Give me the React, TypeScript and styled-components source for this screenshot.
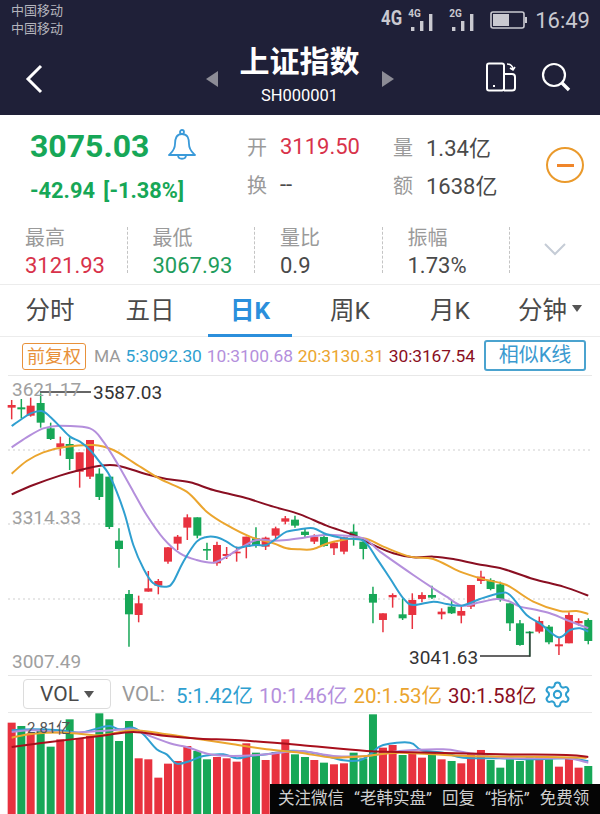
import React from 'react';
import styled, { createGlobalStyle } from 'styled-components';
import { Settings } from 'lucide-react';

const RED = '#e8323f';
const GREEN = '#17a757';
const BLUE = '#2f9fd0';
const PURPLE = '#b48fdc';
const ORANGE = '#eba52e';
const MAROON = '#8a0f22';

const GlobalStyle = createGlobalStyle`
  html, body {
    margin: 0;
    padding: 0;
    background: #fff;
    font-family: Roboto, "Noto Sans CJK SC", sans-serif;
  }
`;

const Page = styled.div`
  width: 600px;
  height: 814px;
  overflow: hidden;
  position: relative;
  background: #fff;
`;

/* ---------- header ---------- */
const Header = styled.header`
  height: 115px;
  background: #1f2038;
  color: #fff;
`;

const StatusBar = styled.div`
  height: 38px;
  display: flex;
  justify-content: space-between;
  padding: 2px 0 0 11px;
`;

const Carriers = styled.div`
  font-size: 13px;
  line-height: 18px;
  color: #b4b4bc;
`;

const StatusRight = styled.div`
  display: flex;
  align-items: center;
  height: 36px;
  color: #c9c9d0;
`;

const Clock = styled.span`
  font-size: 22px;
  margin-left: 8px;
  margin-right: 10px;
`;

const SignalWrap = styled.div`
  position: relative;
  width: 29px;
  height: 26px;
  margin-right: 12px;
`;

const SignalLabel = styled.span`
  position: absolute;
  left: 0;
  top: 1px;
  font-size: 10px;
  font-weight: 700;
`;

const Net = styled.span`
  font-size: 21px;
  font-weight: 700;
  margin-right: 5px;
  transform: scaleX(0.8) translateY(-2px);
  transform-origin: left center;
  width: 22px;
`;

const Nav = styled.div`
  height: 77px;
  display: flex;
  align-items: flex-start;
  position: relative;
`;

const BackBtn = styled.div`
  width: 68px;
  padding: 24px 0 0 25px;
  box-sizing: border-box;
`;

const TitleArea = styled.div`
  flex: 1;
  display: flex;
  justify-content: center;
  align-items: flex-start;
  gap: 22px;
  padding-left: 46px;
`;

const Arrow = styled.span<{ $dir: 'left' | 'right' }>`
  width: 0;
  height: 0;
  margin-top: 31px;
  border-top: 8px solid transparent;
  border-bottom: 8px solid transparent;
  ${(p) => (p.$dir === 'left' ? 'border-right: 12px solid #8c8c96;' : 'border-left: 12px solid #8c8c96;')}
`;

const TitleBlock = styled.div`
  width: 120px;
  text-align: center;
`;

const Title = styled.div`
  font-size: 30px;
  font-weight: 700;
  line-height: 44px;
  white-space: nowrap;
`;

const Code = styled.div`
  font-size: 16.5px;
  line-height: 18px;
  margin-top: 3px;
`;

const NavIcons = styled.div`
  width: 115px;
  display: flex;
  gap: 24px;
  padding-top: 22px;
`;

/* ---------- quote ---------- */
const Quote = styled.section`
  height: 103px;
  display: flex;
  padding-top: 10px;
  box-sizing: border-box;
  position: relative;
`;

const PriceCol = styled.div`
  width: 247px;
  padding-left: 30px;
  box-sizing: border-box;
`;

const PriceRow = styled.div`
  display: flex;
  align-items: center;
  gap: 18px;
  height: 42px;
`;

const Price = styled.span`
  font-size: 32px;
  font-weight: 700;
  color: ${GREEN};
`;

const Change = styled.div`
  font-size: 21.8px;
  font-weight: 700;
  line-height: 26px;
  margin-top: 11px;
  color: ${GREEN};
  word-spacing: 3px;
  white-space: nowrap;
`;

const InfoCol = styled.div<{ $w: number }>`
  width: ${(p) => p.$w}px;
  margin-top: 2px;
`;

const InfoRow = styled.div`
  display: flex;
  align-items: center;
  height: 38px;
`;

const InfoKey = styled.span`
  width: 33px;
  font-size: 20px;
  color: #9a9a9a;
`;

const InfoVal = styled.span<{ $color?: string }>`
  font-size: 22px;
  color: ${(p) => p.$color || '#4a4a4a'};
`;

const MinusBtn = styled.div`
  position: absolute;
  left: 546px;
  top: 32px;
  width: 34px;
  height: 32px;
  border: 2px solid #ea9a2c;
  border-radius: 50%;
  display: flex;
  align-items: center;
  justify-content: center;
  &::after {
    content: '';
    width: 17px;
    height: 3px;
    background: #f0862a;
  }
`;

/* ---------- stats ---------- */
const Stats = styled.section`
  height: 67px;
  display: flex;
  padding-top: 9px;
  box-sizing: border-box;
  border-bottom: 1px solid #ececec;
`;

const Stat = styled.div`
  width: 127.5px;
  height: 46px;
  box-sizing: border-box;
  padding-left: 25px;
  border-right: 1px dashed #c4c4c4;
`;

const StatKey = styled.div`
  font-size: 20px;
  line-height: 24px;
  margin-top: -1px;
  color: #9a9a9a;
`;

const StatVal = styled.div<{ $color?: string }>`
  font-size: 22px;
  line-height: 26px;
  margin-top: 3px;
  white-space: nowrap;
  color: ${(p) => p.$color || '#4a4a4a'};
`;

const Expand = styled.div`
  flex: 1;
  padding: 14px 0 0 33px;
`;

/* ---------- tabs ---------- */
const Tabs = styled.nav`
  height: 52px;
  display: grid;
  grid-template-columns: repeat(6, 100px);
  border-bottom: 1px solid #ececec;
  box-sizing: border-box;
`;

const Tab = styled.div<{ $active?: boolean }>`
  position: relative;
  display: flex;
  align-items: center;
  justify-content: center;
  padding-bottom: 4px;
  font-size: 24.5px;
  font-weight: ${(p) => (p.$active ? 700 : 400)};
  color: ${(p) => (p.$active ? '#2b8fdc' : '#4a4a4a')};
  ${(p) =>
    p.$active &&
    `&::after {
      content: '';
      position: absolute;
      left: 8px;
      right: 8px;
      bottom: -1px;
      height: 3px;
      background: #2b8fdc;
    }`}
`;

const Caret = styled.span`
  margin-left: 5px;
  width: 0;
  height: 0;
  border-left: 5px solid transparent;
  border-right: 5px solid transparent;
  border-top: 7px solid #555;
`;

/* ---------- indicator toolbars ---------- */
const MaBar = styled.div`
  height: 39px;
  margin: 0 8px;
  padding-left: 14px;
  display: flex;
  align-items: center;
  border-bottom: 1px solid #e8e8e8;
  box-sizing: border-box;
  position: relative;
`;

const AdjustBtn = styled.span`
  width: 64px;
  height: 27px;
  box-sizing: border-box;
  border: 1px solid #e8913a;
  border-radius: 3px;
  color: #e8913a;
  font-size: 18px;
  line-height: 25px;
  text-align: center;
  white-space: nowrap;
  margin-right: 8px;
`;

const MaText = styled.span<{ $color: string }>`
  font-size: 17.4px;
  letter-spacing: -0.1px;
  color: ${(p) => p.$color};
  margin-right: 5px;
  white-space: nowrap;
`;

const SimilarBtn = styled.span`
  position: absolute;
  left: 476px;
  top: 3px;
  width: 102px;
  height: 31px;
  box-sizing: border-box;
  background: #fff;
  border: 2px solid #4ba3cf;
  border-radius: 3px;
  color: #3a9ad0;
  font-size: 20px;
  line-height: 26px;
  text-align: center;
  white-space: nowrap;
`;

const ChartArea = styled.div`
  position: relative;
  height: 299px;
`;

const ChartSvg = styled.svg`
  display: block;
  width: 600px;
`;

const AxisLabel = styled.span<{ $top: number }>`
  position: absolute;
  left: 12px;
  top: ${(p) => p.$top}px;
  font-size: 19px;
  line-height: 20px;
  color: #a0a0a0;
`;

const ExtremeLabel = styled.span<{ $left: number; $top: number }>`
  position: absolute;
  left: ${(p) => p.$left}px;
  top: ${(p) => p.$top}px;
  font-size: 19px;
  line-height: 20px;
  color: #333;
`;

const VolBar = styled.div`
  height: 38px;
  margin: 0 8px;
  padding-left: 15px;
  display: flex;
  align-items: center;
  border-top: 1px solid #e4e4e4;
  border-bottom: 1px solid #e8e8e8;
  box-sizing: border-box;
`;

const VolSelect = styled.span`
  width: 88px;
  height: 30px;
  box-sizing: border-box;
  border: 1px solid #dcdcdc;
  border-radius: 4px;
  display: flex;
  align-items: center;
  justify-content: center;
  font-size: 21px;
  color: #4a4a4a;
  margin-right: 11px;
`;

const VolText = styled.span<{ $color: string }>`
  font-size: 20.5px;
  color: ${(p) => p.$color};
  margin-right: 6px;
  white-space: nowrap;
`;

const VolCaption = styled(VolText)`
  margin-right: 11px;
`;

const GearWrap = styled.span`
  display: flex;
  color: ${BLUE};
  margin-left: 1px;
`;

const VolArea = styled.div`
  position: relative;
  height: 102px;
`;

const VolMax = styled.span`
  position: absolute;
  left: 27px;
  top: 3px;
  font-size: 15px;
  color: #555;
`;

const Watermark = styled.div`
  position: absolute;
  left: 270px;
  bottom: 0;
  width: 330px;
  height: 30px;
  background: #050505;
  color: #cfcfcf;
  font-size: 16.5px;
  line-height: 30px;
  white-space: nowrap;
  padding-left: 8px;
  box-sizing: border-box;
  word-spacing: 6px;
`;

/* ---------- data, zoom-crop units (3 = 1px) ---------- */
type Candle = [number, number, number, number, number, 'R' | 'G'];

const left: Candle[] = [
  [35, 75, 133, 90, 98, 'R'], [64, 72, 130, 97, 103, 'G'], [92, 68, 125, 92, 122, 'R'],
  [122, 55, 158, 84, 143, 'G'], [152, 143, 195, 160, 192, 'G'], [181, 185, 242, 205, 217, 'R'],
  [209, 187, 285, 207, 252, 'G'], [239, 232, 338, 232, 290, 'R'], [270, 195, 312, 195, 305, 'R'],
  [298, 280, 375, 296, 366, 'G'], [328, 305, 462, 305, 456, 'G'], [357, 460, 578, 497, 522, 'G'],
  [387, 645, 815, 657, 718, 'G'], [416, 662, 742, 685, 720, 'R'], [445, 588, 650, 640, 650, 'R'],
  [475, 612, 658, 618, 632, 'R'], [504, 516, 566, 517, 560, 'R'], [533, 480, 525, 485, 506, 'R'],
  [562, 418, 495, 427, 458, 'R'], [592, 427, 490, 427, 482, 'G'], [621, 503, 555, 522, 527, 'G'],
  [651, 500, 572, 510, 565, 'R'], [680, 516, 552, 537, 543, 'R'], [710, 515, 560, 530, 535, 'R'],
  [739, 485, 550, 485, 516, 'R'], [768, 457, 518, 490, 512, 'G'], [797, 485, 525, 488, 515, 'R'],
  [827, 455, 492, 460, 482, 'R'], [856, 423, 448, 430, 440, 'R'], [885, 422, 458, 434, 452, 'G'],
];

const right: Candle[] = [
  [15, 462, 487, 470, 480, 'G'], [43, 478, 507, 485, 500, 'R'], [72, 480, 515, 486, 513, 'G'],
  [102, 500, 540, 503, 520, 'R'], [132, 485, 538, 487, 530, 'R'], [161, 448, 512, 470, 485, 'G'],
  [190, 492, 553, 500, 522, 'G'], [219, 635, 745, 657, 683, 'G'], [249, 715, 772, 715, 735, 'R'],
  [278, 655, 698, 660, 667, 'R'], [308, 670, 735, 718, 730, 'G'], [337, 655, 762, 675, 720, 'R'],
  [366, 652, 682, 660, 672, 'R'], [396, 632, 672, 660, 668, 'G'], [425, 700, 733, 710, 718, 'R'],
  [455, 678, 717, 695, 715, 'G'], [484, 695, 745, 708, 722, 'R'], [513, 630, 702, 630, 695, 'R'],
  [543, 587, 627, 605, 618, 'R'], [572, 610, 646, 615, 642, 'G'], [601, 620, 680, 628, 675, 'G'],
  [630, 685, 768, 685, 745, 'G'], [660, 735, 812, 745, 810, 'G'], [689, 768, 845, 770, 775, 'G'],
  [718, 725, 775, 738, 770, 'R'], [747, 750, 808, 755, 802, 'G'], [777, 785, 840, 808, 814, 'R'],
  [807, 712, 805, 720, 805, 'R'], [836, 730, 752, 738, 745, 'R'], [865, 730, 808, 735, 798, 'G'],
];

const candles: Candle[] = [...left, ...right.map((c) => [c[0] + 900, c[1], c[2], c[3], c[4], c[5]] as Candle)];

const joinLine = (a: number[][], b: number[][]) => [...a, ...b.map(([x, y]) => [x + 900, y])];

const maLines: [string, number[][]][] = [
  [MAROON, joinLine(
    [[35,358],[100,330],[180,302],[240,285],[300,272],[355,272],[440,298],[500,312],[570,322],[640,345],[730,367],[820,395]],
    [[0,418],[80,452],[160,480],[220,510],[280,535],[340,547],[400,545],[460,552],[530,567],[610,582],[700,612],[790,635],[865,662]],
  )],
  [ORANGE, joinLine(
    [[35,296],[80,258],[130,232],[190,217],[280,210],[340,225],[400,262],[480,312],[560,350],[620,410],[680,450],[750,485],[820,505],[860,520]],
    [[0,523],[40,522],[100,500],[190,490],[250,515],[330,545],[400,552],[480,590],[560,615],[620,630],[700,680],[780,708],[830,708],[865,717]],
  )],
  [PURPLE, joinLine(
    [[35,217],[80,187],[130,160],[180,152],[270,160],[310,200],[350,262],[400,350],[440,420],[490,490],[540,535],[590,555],[640,563],[680,545],[720,520],[770,495],[820,497],[860,495]],
    [[0,490],[50,482],[100,480],[190,490],[240,530],[340,600],[400,640],[440,665],[485,692],[540,682],[590,672],[625,678],[660,695],[700,703],[750,715],[800,735],[865,760]],
  )],
  [BLUE, joinLine(
    [[35,153],[65,132],[92,115],[125,108],[150,125],[180,155],[210,185],[240,200],[270,225],[300,262],[325,295],[350,350],[375,420],[400,510],[430,580],[460,625],[500,635],[520,620],[550,560],[590,500],[620,486],[650,487],[680,500],[710,518],[740,514],[770,510],[800,510],[830,490],[860,470]],
    [[0,463],[40,460],[80,478],[130,490],[190,497],[230,550],[270,610],[310,670],[340,690],[400,680],[440,687],[485,692],[540,672],[600,655],[630,660],[680,720],[720,745],[775,787],[810,765],[840,760],[865,770]],
  )],
];

const volTops = [
  155,165,187,178,227,205,145,203,195,127,145,210,150,262,265,320,278,270,225,240,265,258,262,272,217,245,267,243,205,250,
  258,267,275,280,277,245,262,130,230,222,252,245,260,245,265,270,277,250,237,267,290,265,270,255,255,265,287,260,290,285,
];

const volLines: [string, number[][]][] = [
  [BLUE, joinLine(
    [[35,178],[100,175],[180,178],[240,185],[300,170],[330,165],[360,175],[400,170],[430,190],[470,235],[500,250],[530,278],[570,270],[610,255],[670,250],[710,262],[750,255],[800,250],[860,240]],
    [[0,240],[60,250],[130,268],[180,268],[210,250],[250,222],[330,215],[365,238],[430,245],[490,260],[600,262],[700,265],[800,262],[865,270]],
  )],
  [PURPLE, joinLine(
    [[35,183],[100,178],[200,185],[300,180],[400,175],[450,195],[520,220],[560,228],[630,250],[700,255],[800,250]],
    [[0,240],[100,255],[200,255],[300,240],[430,235],[500,245],[600,260],[700,262],[800,262],[865,275]],
  )],
  [ORANGE, joinLine(
    [[35,200],[100,188],[200,185],[300,193],[400,178],[500,190],[600,205],[700,220],[800,235]],
    [[0,245],[100,260],[200,255],[300,245],[500,255],[700,257],[860,260]],
  )],
  ['#a80f1c', joinLine(
    [[35,228],[150,213],[300,195],[400,183],[500,195],[600,203],[720,208]],
    [[0,222],[200,240],[400,245],[600,250],[800,252],[865,258]],
  )],
];

// smooth path through the sampled points
const toPath = (pts: number[][]) => {
  let d = `M${pts[0][0]} ${pts[0][1]}`;
  for (let i = 0; i < pts.length - 1; i++) {
    const p0 = pts[i - 1] || pts[i];
    const p1 = pts[i];
    const p2 = pts[i + 1];
    const p3 = pts[i + 2] || p2;
    const c1x = p1[0] + (p2[0] - p0[0]) / 6;
    const c1y = p1[1] + (p2[1] - p0[1]) / 6;
    const c2x = p2[0] - (p3[0] - p1[0]) / 6;
    const c2y = p2[1] - (p3[1] - p1[1]) / 6;
    d += `C${c1x} ${c1y} ${c2x} ${c2y} ${p2[0]} ${p2[1]}`;
  }
  return d;
};

const colorOf = (c: 'R' | 'G') => (c === 'R' ? RED : GREEN);

/* chart svg starts at page y=376; crop y=0 is page y=375 */
const KChart = () => (
  <ChartSvg height="299" viewBox="0 1 600 299">
    {[75, 149, 224].map((y) => (
      <line key={y} x1="8" x2="592" y1={y} y2={y} stroke="#cfcfcf" strokeDasharray="2 3" />
    ))}
    <g transform="scale(0.3333)" fill="none">
      {candles.map((c) => (
        <g key={c[0]}>
          <line x1={c[0]} x2={c[0]} y1={c[1]} y2={c[2]} stroke={colorOf(c[5])} strokeWidth="4.5" />
          <rect x={c[0] - 12} y={c[3]} width="24" height={Math.max(c[4] - c[3], 5)} fill={colorOf(c[5])} />
        </g>
      ))}
      {maLines.map(([color, pts]) => (
        <path key={color} d={toPath(pts)} stroke={color} strokeWidth="6" strokeLinejoin="round" />
      ))}
    </g>
    <path d="M40 17H91" stroke="#333" strokeWidth="1.3" fill="none" />
    <path d="M480 281H530V257" stroke="#333" strokeWidth="1.3" fill="none" />
  </ChartSvg>
);

/* volume svg starts at page y=712; crop y=0 is page y=670 */
const VolChart = () => (
  <ChartSvg height="102" viewBox="0 42 600 102">
    <g transform="scale(0.3333)" fill="none">
      {candles.map((c, i) => (
        <rect key={c[0]} x={c[0] - 12} y={volTops[i]} width="24" height={440 - volTops[i]} fill={colorOf(c[5])} />
      ))}
      {volLines.map(([color, pts]) => (
        <path key={color} d={toPath(pts)} stroke={color} strokeWidth="6" strokeLinejoin="round" />
      ))}
    </g>
  </ChartSvg>
);

const SignalBars = ({ label }: { label: string }) => (
  <SignalWrap>
    <SignalLabel>{label}</SignalLabel>
    <svg width="29" height="26" viewBox="0 0 29 26" fill="#c9c9d0">
      <rect x="3" y="20" width="3.4" height="4" />
      <rect x="12" y="14" width="3.4" height="10" />
      <rect x="21" y="7" width="3.4" height="17" />
    </svg>
  </SignalWrap>
);

export default function App() {
  return (
    <Page>
      <GlobalStyle />
      <Header>
        <StatusBar>
          <Carriers>
            中国移动
            <br />
            中国移动
          </Carriers>
          <StatusRight>
            <Net>4G</Net>
            <SignalBars label="4G" />
            <SignalBars label="2G" />
            <svg width="37" height="20" viewBox="0 0 37 20" fill="none">
              <rect x="1" y="2" width="33" height="16" rx="2" stroke="#c9c9d0" strokeWidth="1.6" />
              <rect x="3" y="4" width="16" height="12" fill="#c9c9d0" />
              <rect x="35" y="7" width="2" height="6" fill="#c9c9d0" />
            </svg>
            <Clock>16:49</Clock>
          </StatusRight>
        </StatusBar>
        <Nav>
          <BackBtn>
            <svg width="20" height="30" viewBox="0 0 20 30" fill="none">
              <path d="M16 2L3 15L16 28" stroke="#fff" strokeWidth="3" />
            </svg>
          </BackBtn>
          <TitleArea>
            <Arrow $dir="left" />
            <TitleBlock>
              <Title>上证指数</Title>
              <Code>SH000001</Code>
            </TitleBlock>
            <Arrow $dir="right" />
          </TitleArea>
          <NavIcons>
            <svg width="32" height="30" viewBox="0 0 32 30" fill="none" stroke="#fff" strokeWidth="2">
              <rect x="2" y="1.5" width="17" height="27" rx="2" />
              <path d="M19 12H27Q30 12 30 15V26Q30 28.5 27 28.5H19" />
              <path d="M22 2Q27 2 28 7M25 6L28 8L30 5" strokeWidth="1.6" />
              <path d="M8 24H10" />
            </svg>
            <svg width="30" height="30" viewBox="0 0 30 30" fill="none" stroke="#fff">
              <circle cx="13" cy="13" r="11" strokeWidth="2.2" />
              <path d="M21 21L28 28" strokeWidth="3.4" />
            </svg>
          </NavIcons>
        </Nav>
      </Header>

      <Quote>
        <PriceCol>
          <PriceRow>
            <Price>3075.03</Price>
            <svg width="30" height="34" viewBox="0 0 30 34" fill="none" stroke="#3a9ad9" strokeWidth="1.8">
              <path d="M15 5C9 5 8 10 8 15C8 21 5 23 2 26H28C25 23 22 21 22 15C22 10 21 5 15 5Z" strokeLinejoin="round" />
              <circle cx="15" cy="3" r="2" />
              <path d="M11 26C11 31 19 31 19 26" />
            </svg>
          </PriceRow>
          <Change>-42.94 [-1.38%]</Change>
        </PriceCol>
        <InfoCol $w={146}>
          <InfoRow>
            <InfoKey>开</InfoKey>
            <InfoVal $color="#d8324a">3119.50</InfoVal>
          </InfoRow>
          <InfoRow>
            <InfoKey>换</InfoKey>
            <InfoVal>--</InfoVal>
          </InfoRow>
        </InfoCol>
        <InfoCol $w={150}>
          <InfoRow>
            <InfoKey>量</InfoKey>
            <InfoVal>1.34亿</InfoVal>
          </InfoRow>
          <InfoRow>
            <InfoKey>额</InfoKey>
            <InfoVal>1638亿</InfoVal>
          </InfoRow>
        </InfoCol>
        <MinusBtn />
      </Quote>

      <Stats>
        <Stat>
          <StatKey>最高</StatKey>
          <StatVal $color="#d8324a">3121.93</StatVal>
        </Stat>
        <Stat>
          <StatKey>最低</StatKey>
          <StatVal $color="#1f9d5c">3067.93</StatVal>
        </Stat>
        <Stat>
          <StatKey>量比</StatKey>
          <StatVal>0.9</StatVal>
        </Stat>
        <Stat>
          <StatKey>振幅</StatKey>
          <StatVal>1.73%</StatVal>
        </Stat>
        <Expand>
          <svg width="24" height="14" viewBox="0 0 24 14" fill="none">
            <path d="M2 2L12 12L22 2" stroke="#c5ccd6" strokeWidth="2" />
          </svg>
        </Expand>
      </Stats>

      <Tabs>
        <Tab>分时</Tab>
        <Tab>五日</Tab>
        <Tab $active>日K</Tab>
        <Tab>周K</Tab>
        <Tab>月K</Tab>
        <Tab>
          分钟
          <Caret />
        </Tab>
      </Tabs>

      <MaBar>
        <AdjustBtn>前复权</AdjustBtn>
        <MaText $color="#9a9a9a">MA</MaText>
        <MaText $color={BLUE}>5:3092.30</MaText>
        <MaText $color={PURPLE}>10:3100.68</MaText>
        <MaText $color={ORANGE}>20:3130.31</MaText>
        <MaText $color={MAROON}>30:3167.54</MaText>
        <SimilarBtn>相似K线</SimilarBtn>
      </MaBar>

      <ChartArea>
        <KChart />
        <AxisLabel $top={4}>3621.17</AxisLabel>
        <AxisLabel $top={132}>3314.33</AxisLabel>
        <AxisLabel $top={276}>3007.49</AxisLabel>
        <ExtremeLabel $left={93} $top={7}>3587.03</ExtremeLabel>
        <ExtremeLabel $left={409} $top={272}>3041.63</ExtremeLabel>
      </ChartArea>

      <VolBar>
        <VolSelect>
          VOL
          <Caret />
        </VolSelect>
        <VolCaption $color="#9a9a9a">VOL:</VolCaption>
        <VolText $color={BLUE}>5:1.42亿</VolText>
        <VolText $color={PURPLE}>10:1.46亿</VolText>
        <VolText $color={ORANGE}>20:1.53亿</VolText>
        <VolText $color={MAROON}>30:1.58亿</VolText>
        <GearWrap>
          <Settings size={29} strokeWidth={1.7} />
        </GearWrap>
      </VolBar>

      <VolArea>
        <VolChart />
        <VolMax>2.81亿</VolMax>
      </VolArea>

      <Watermark>关注微信 “老韩实盘” 回复 “指标” 免费领</Watermark>
    </Page>
  );
}
